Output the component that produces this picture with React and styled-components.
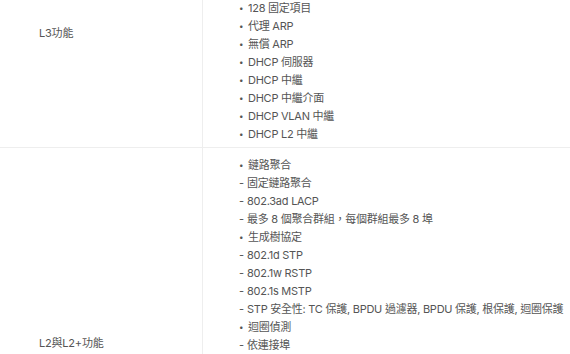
import React, { useLayoutEffect, useRef } from 'react';
import styled, { createGlobalStyle } from 'styled-components';

const GlobalStyle = createGlobalStyle`
  html, body {
    margin: 0;
    padding: 0;
    background: #fff;
  }

  body {
    font-family: Inter, 'Noto Sans CJK TC', sans-serif;
    color: #555;
  }
`;

const Viewport = styled.div`
  height: 100vh;
  overflow: hidden;
`;

const Table = styled.div`
  display: grid;
  grid-template-columns: 203px 1fr;
`;

const Label = styled.div`
  display: flex;
  align-items: center;
  padding: 0 0 2px 39px;
  border-right: 1px solid #eeeeee;
  border-bottom: 1px solid ${({ $last }) => ($last ? 'transparent' : '#eeeeee')};
  font-size: 11px;
  letter-spacing: -0.2px;
  color: #555;
`;

const Cell = styled.div`
  padding: 8px 0 4px 35px;
  border-bottom: 1px solid ${({ $last }) => ($last ? 'transparent' : '#eeeeee')};
`;

const Line = styled.div`
  height: 18px;
  line-height: 18px;
  font-size: 11px;
  letter-spacing: -0.25px;
  white-space: nowrap;
  color: #555;
`;

const Marker = styled.span`
  display: inline-block;
  width: ${({ $dot }) => ($dot ? '9px' : '8px')};
  padding-left: ${({ $dot }) => ($dot ? '1px' : '1px')};
  font-size: ${({ $dot }) => ($dot ? '8px' : '11px')};
  vertical-align: top;
`;

const rows = [
  {
    label: 'L3功能',
    items: [
      '• IPv4 靜態路由',
      '• 最多 32 個 IP 介面',
      '• 最多 32 條靜態路由',
      '• ARP 表',
      '• 128 固定項目',
      '• 代理 ARP',
      '• 無償 ARP',
      '• DHCP 伺服器',
      '• DHCP 中繼',
      '• DHCP 中繼介面',
      '• DHCP VLAN 中繼',
      '• DHCP L2 中繼',
    ],
  },
  {
    label: 'L2與L2+功能',
    items: [
      '• 鏈路聚合',
      '- 固定鏈路聚合',
      '- 802.3ad LACP',
      '- 最多 8 個聚合群組，每個群組最多 8 埠',
      '• 生成樹協定',
      '- 802.1d STP',
      '- 802.1w RSTP',
      '- 802.1s MSTP',
      '- STP 安全性: TC 保護, BPDU 過濾器, BPDU 保護, 根保護, 迴圈保護',
      '• 迴圈偵測',
      '- 依連接埠',
      '- 依 VLAN',
      '• IGMP 窺探',
      '- IGMP v1/v2/v3 窺探',
      '- 快速離開',
      '- 查詢器',
      '• MLD 窺探',
      '- MLD v1/v2 窺探',
      '• 連接埠鏡像',
      '- 一對一',
      '- 多對一',
    ],
  },
];

const App = () => {
  const viewRef = useRef(null);

  // the page is shown scrolled a little into the spec table
  useLayoutEffect(() => {
    if (viewRef.current) viewRef.current.scrollTop = 81;
  }, []);

  return (
    <>
      <GlobalStyle />
      <Viewport ref={viewRef}>
        <Table>
          {rows.map((row, i) => {
            const last = i === rows.length - 1;
            return (
              <React.Fragment key={row.label}>
                <Label $last={last}>{row.label}</Label>
                <Cell $last={last}>
                  {row.items.map((item) => {
                    const dot = item.startsWith('•');
                    return (
                      <Line key={item}>
                        <Marker $dot={dot}>{item[0]}</Marker>
                        {item.slice(2)}
                      </Line>
                    );
                  })}
                </Cell>
              </React.Fragment>
            );
          })}
        </Table>
      </Viewport>
    </>
  );
};

export default App;
